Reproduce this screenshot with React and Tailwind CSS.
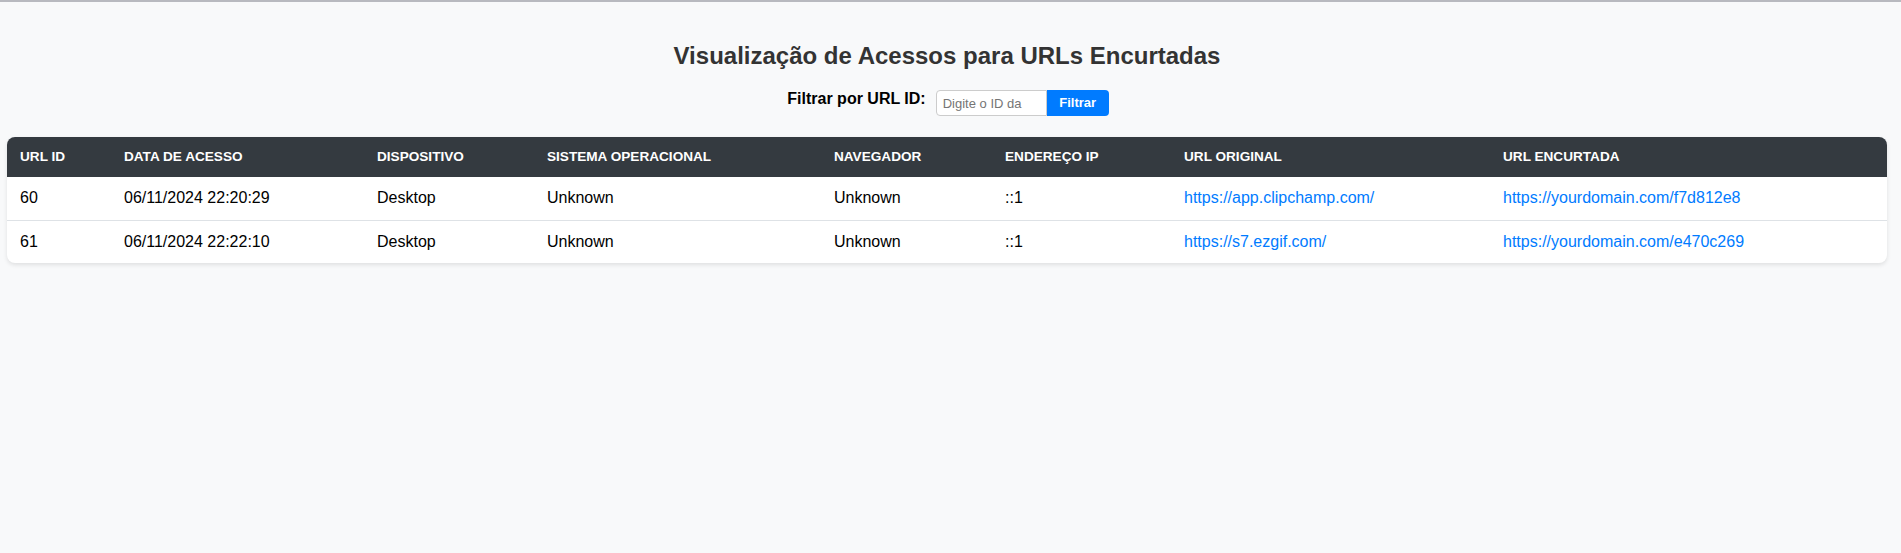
export default function App() {
  const rows = [
    { id: "60", date: "06/11/2024 22:20:29", dev: "Desktop", os: "Unknown", nav: "Unknown", ip: "::1", orig: "https://app.clipchamp.com/", short: "https://yourdomain.com/f7d812e8" },
    { id: "61", date: "06/11/2024 22:22:10", dev: "Desktop", os: "Unknown", nav: "Unknown", ip: "::1", orig: "https://s7.ezgif.com/", short: "https://yourdomain.com/e470c269" },
  ];
  const heads = ["URL ID", "Data de Acesso", "Dispositivo", "Sistema Operacional", "Navegador", "Endereço IP", "URL Original", "URL Encurtada"];
  const widths = ["w-[104px]", "w-[253px]", "w-[170px]", "w-[287px]", "w-[171px]", "w-[179px]", "w-[319px]", "w-[397px]"];
  return (
    <div className="min-h-[553px] bg-[#f8f9fa] border-t-2 border-[#b8b9bf] font-['Liberation_Sans',Arial,sans-serif]">
      <div className="pl-[7px] pr-[14px] pt-[40px]">
        <h2 className="text-center text-[24px] font-bold text-[#333] leading-[28px]">
          Visualização de Acessos para URLs Encurtadas
        </h2>
        <div className="flex justify-center items-start mt-[20px] pl-[2px]">
          <label className="text-[16px] font-bold text-black leading-[18px] mr-[10px]">Filtrar por URL ID:</label>
          <input
            placeholder="Digite o ID da"
            className="w-[111px] h-[26px] border border-[#ccc] rounded-l-[4px] bg-white px-[6px] text-[13px] text-black placeholder:text-[#757575] outline-none"
          />
          <button className="w-[62px] h-[26px] bg-[#007bff] text-white text-[13px] font-bold rounded-r-[4px]">Filtrar</button>
        </div>
        <div className="mt-[21px] rounded-[8px] overflow-hidden bg-white shadow-[0_2px_4px_rgba(0,0,0,0.1)]">
          <table className="w-full table-fixed border-collapse">
            <thead>
              <tr className="bg-[#343a40] h-[40px]">
                {heads.map((h, i) => (
                  <th key={i} className={`${widths[i]} text-left uppercase text-white font-bold text-[13.6px] leading-[16px] px-[13px] align-middle`}>
                    {h}
                  </th>
                ))}
              </tr>
            </thead>
            <tbody>
              {rows.map((r, idx) => (
                <tr key={r.id} className={`h-[43px] ${idx === 0 ? "border-b border-[#dee2e6]" : ""}`}>
                  <td className="px-[13px] text-[16px] text-black align-middle">{r.id}</td>
                  <td className="px-[13px] text-[16px] text-black align-middle">{r.date}</td>
                  <td className="px-[13px] text-[16px] text-black align-middle">{r.dev}</td>
                  <td className="px-[13px] text-[16px] text-black align-middle">{r.os}</td>
                  <td className="px-[13px] text-[16px] text-black align-middle">{r.nav}</td>
                  <td className="px-[13px] text-[16px] text-black align-middle">{r.ip}</td>
                  <td className="px-[13px] text-[16px] align-middle"><a href="#" className="text-[#007bff]">{r.orig}</a></td>
                  <td className="px-[13px] text-[16px] align-middle"><a href="#" className="text-[#007bff]">{r.short}</a></td>
                </tr>
              ))}
            </tbody>
          </table>
        </div>
      </div>
    </div>
  );
}
